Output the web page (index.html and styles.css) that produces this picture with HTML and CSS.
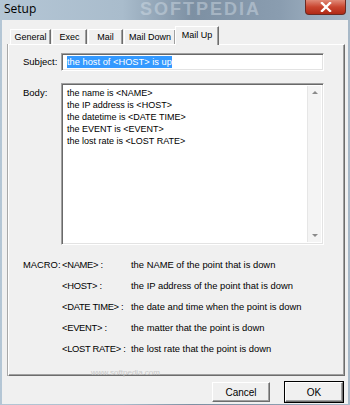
FILE: index.html
```html
<!DOCTYPE html>
<html lang="en">
<head>
    <meta charset="UTF-8">
    <title>Setup</title>
    <link rel="stylesheet" href="styles.css">
</head>
<body>

<div class="window">
    <!-- Barra de titulo -->
    <div class="titlebar">
        <span class="title">Setup</span>
        <span class="watermark">SOFTPEDIA</span>
        <div class="close">
            <svg width="14" height="10" viewBox="0 0 14 10">
                <path d="M3 1 L11 9 M11 1 L3 9" stroke="#fff" stroke-width="2.4" stroke-linecap="square"/>
            </svg>
        </div>
    </div>

    <div class="client">
        <div class="tabs">
            <div class="tab t-general">General</div>
            <div class="tab t-exec">Exec</div>
            <div class="tab t-mail">Mail</div>
            <div class="tab t-down">Mail Down</div>
            <div class="tab t-up active">Mail Up</div>
        </div>

        <div class="pane">
            <div class="row">
                <label class="lbl">Subject:</label>
                <div class="field"><span class="sel">the host of &lt;HOST&gt; is up</span></div>
            </div>

            <div class="row body-row">
                <label class="lbl">Body:</label>
                <div class="memo">
                    <div class="memo-text">
                        <div>the name is &lt;NAME&gt;</div>
                        <div>the IP address is &lt;HOST&gt;</div>
                        <div>the datetime is &lt;DATE TIME&gt;</div>
                        <div>the EVENT is &lt;EVENT&gt;</div>
                        <div>the lost rate is &lt;LOST RATE&gt;</div>
                    </div>
                    <div class="scroll">
                        <span class="arrow up"></span>
                        <span class="arrow down"></span>
                    </div>
                </div>
            </div>

            <div class="macros">
                <div class="macro"><span class="m-lbl">MACRO:</span><span class="m-key">&lt;NAME&gt; :</span><span>the NAME of the point that is down</span></div>
                <div class="macro"><span class="m-lbl"></span><span class="m-key">&lt;HOST&gt; :</span><span>the IP address of the point that is down</span></div>
                <div class="macro"><span class="m-lbl"></span><span class="m-key">&lt;DATE TIME&gt; :</span><span>the date and time when the point is down</span></div>
                <div class="macro"><span class="m-lbl"></span><span class="m-key">&lt;EVENT&gt; :</span><span>the matter that the point is down</span></div>
                <div class="macro"><span class="m-lbl"></span><span class="m-key">&lt;LOST RATE&gt; :</span><span>the lost rate that the point is down</span></div>
            </div>
            <div class="wm-small">www.softpedia.com</div>
        </div>

        <div class="buttons">
            <button class="btn">Cancel</button>
            <button class="btn default">OK</button>
        </div>
    </div>
</div>

</body>
</html>
```

FILE: styles.css
```css
body {
    margin: 0;
    font-family: "Liberation Sans", Arial, sans-serif;
    font-size: 9px;
    color: #000;
}
.window {
    width: 350px;
    height: 405px;
    box-sizing: border-box;
    padding: 0 2px 1px 2px;
    background: linear-gradient(90deg, #b4c6d5 0%, #a9bccc 35%, #7d90a3 55%, #8a9db0 80%, #a8b9c8 100%);
    display: flex;
    flex-direction: column;
    overflow: hidden;
}
.titlebar {
    height: 20px;
    display: flex;
    align-items: flex-start;
    position: relative;
}
.title {
    font-family: "Open Sans", "Noto Sans", sans-serif;
    font-size: 12px;
    line-height: 18px;
    padding-left: 2px;
    color: #000;
}
.watermark {
    position: absolute;
    left: 138px;
    top: 0;
    font-family: "Liberation Sans", sans-serif;
    font-weight: bold;
    font-size: 18px;
    line-height: 19px;
    letter-spacing: 2px;
    color: #dde6ee;
    opacity: 0.4;
}
.close {
    margin-left: auto;
    margin-right: 2px;
    width: 39px;
    height: 14px;
    border: 1px solid #6b2a22;
    border-top: none;
    border-radius: 0 0 4px 4px;
    background: linear-gradient(#e08a78 0%, #c9452f 50%, #b02a16 100%);
    display: flex;
    justify-content: center;
    align-items: center;
    position: relative;
    z-index: 1;
}
.client {
    flex: 1;
    background-color: #f0f0f0;
    padding: 6px 3px 0 6px;
    display: flex;
    flex-direction: column;
}
.tabs {
    height: 18px;
    display: flex;
    align-items: flex-end;
    padding-left: 2px;
    position: relative;
    z-index: 1;
}
.tab {
    height: 15px;
    box-sizing: border-box;
    padding: 1px 0 0 0;
    text-align: center;
    white-space: nowrap;
    font-size: 9px;
    line-height: 13px;
    border-left: 1px solid #fff;
    border-top: 1px solid #fff;
    border-right: 1px solid #6d6d6d;
    box-shadow: inset -1px 0 #a0a0a0;
    margin-right: 1px;
}
.t-general { width: 41px; }
.t-exec { width: 35px; }
.t-mail { width: 35px; }
.t-down { width: 52px; }
.tab.active {
    width: 44px;
    height: 19px;
    margin: 0 0 -1px -2px;
    padding: 2px 0 0 0;
    background-color: #f0f0f0;
}
.pane {
    height: 332px;
    box-sizing: border-box;
    border-left: 1px solid #fff;
    border-top: 1px solid #fff;
    border-right: 1px solid #6d6d6d;
    border-bottom: 1px solid #6d6d6d;
    box-shadow: inset -1px -1px #a0a0a0, -1px 0 #a8a8a8;
    padding: 8px 0 0 14px;
    position: relative;
}
.row {
    display: flex;
    align-items: flex-start;
}
.lbl {
    width: 38px;
    line-height: 18px;
    font-size: 9.5px;
}
.field {
    width: 263px;
    height: 18px;
    box-sizing: border-box;
    background: #fff;
    border-top: 1px solid #a0a0a0;
    border-left: 1px solid #a0a0a0;
    border-right: 1px solid #fff;
    border-bottom: 1px solid #fff;
    box-shadow: inset 1px 1px #696969, inset -1px -1px #e3e3e3;
    padding: 2px 0 0 5px;
}
.sel {
    background-color: #3399ff;
    color: #fff;
    font-size: 9.3px;
    line-height: 12px;
    display: inline-block;
}
.body-row {
    margin-top: 12px;
}
.body-row .lbl {
    line-height: 14px;
    padding-top: 3px;
}
.memo {
    width: 263px;
    height: 162px;
    box-sizing: border-box;
    background: #fff;
    border-top: 1px solid #a0a0a0;
    border-left: 1px solid #a0a0a0;
    border-right: 1px solid #fff;
    border-bottom: 1px solid #fff;
    box-shadow: inset 1px 1px #696969, inset -1px -1px #e3e3e3;
    display: flex;
    padding: 2px;
}
.memo-text {
    flex: 1;
    padding: 1px 0 0 3px;
    line-height: 12px;
}
.scroll {
    width: 13px;
    background: #f4f4f4;
    border-left: 1px solid #e6e6e6;
    display: flex;
    flex-direction: column;
    justify-content: space-between;
    align-items: center;
    padding: 5px 0;
}
.arrow {
    width: 0;
    height: 0;
    border-left: 3px solid transparent;
    border-right: 3px solid transparent;
}
.arrow.up {
    border-bottom: 3px solid #8a8a8a;
}
.arrow.down {
    border-top: 3px solid #8a8a8a;
}
.macros {
    margin-top: 13px;
}
.macro {
    display: flex;
    height: 21px;
    font-size: 9.4px;
    line-height: 14px;
}
.m-lbl {
    width: 39px;
}
.m-key {
    width: 69px;
    letter-spacing: -0.3px;
}
.wm-small {
    position: absolute;
    left: 82px;
    top: 323px;
    font-size: 8px;
    color: #c8c8c8;
}
.buttons {
    display: flex;
    justify-content: flex-end;
    gap: 15px;
    margin-top: 6px;
    padding-right: 2px;
}
.btn {
    width: 58px;
    height: 20px;
    font-family: "Liberation Sans", Arial, sans-serif;
    font-size: 10px;
    color: #000;
    background: #f0f0f0;
    border-top: 1px solid #fff;
    border-left: 1px solid #fff;
    border-right: 1px solid #6d6d6d;
    border-bottom: 1px solid #6d6d6d;
    box-shadow: inset -1px -1px #a0a0a0;
    padding: 0;
}
.btn.default {
    outline: 1px solid #000;
}
```
